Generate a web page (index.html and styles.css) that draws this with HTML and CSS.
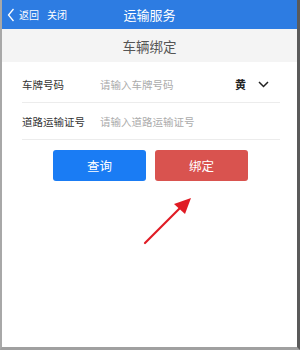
FILE: index.html
```html
<!DOCTYPE html>
<html lang="zh">
<head>
<meta charset="utf-8">
<link rel="stylesheet" href="styles.css">
</head>
<body>
<div class="frame">
  <header class="topbar">
    <div class="nav">
      <svg class="back" width="8" height="14" viewBox="0 0 8 14"><path d="M6.5 1 L1.5 7 L6.5 13" fill="none" stroke="#fff" stroke-width="1.3"/></svg>
      <span class="navtext">返回</span>
      <span class="navtext close">关闭</span>
    </div>
    <div class="title">运输服务</div>
  </header>
  <div class="subhead">车辆绑定</div>
  <div class="form">
    <div class="row">
      <span class="label">车牌号码</span>
      <span class="placeholder">请输入车牌号码</span>
      <span class="color">黄</span>
      <svg class="chev" width="11" height="7" viewBox="0 0 11 7"><path d="M1 1 L5.5 5.5 L10 1" fill="none" stroke="#222" stroke-width="1.5"/></svg>
    </div>
    <div class="row">
      <span class="label">道路运输证号</span>
      <span class="placeholder">请输入道路运输证号</span>
    </div>
  </div>
  <div class="buttons">
    <div class="btn blue">查询</div>
    <div class="btn red">绑定</div>
  </div>
  <svg class="arrow" width="300" height="350" viewBox="0 0 300 350">
    <line x1="145" y1="243" x2="181" y2="207" stroke="#e01b24" stroke-width="2.2" stroke-linecap="round"/>
    <polygon points="191,198 174,204 185,214" fill="#e01b24"/>
  </svg>
</div>
</body>
</html>
```
FILE: styles.css
```css
* { box-sizing: border-box; }
html, body { margin: 0; padding: 0; background: #fff; }
body {
  font-family: "Noto Sans CJK SC", "Noto Sans", sans-serif;
}
.frame {
  position: relative;
  width: 300px;
  height: 350px;
  border-left: 2px solid #a8a8a8;
  border-right: 3px solid #5a5a5a;
  border-bottom: 3px solid #a0a0a0;
  overflow: hidden;
  background: #fff;
}
.topbar {
  height: 29px;
  background: #2d7ce2;
  display: flex;
  align-items: center;
  position: relative;
  color: #fff;
}
.nav {
  display: flex;
  align-items: center;
  padding-left: 5px;
}
.back { margin-right: 4px; }
.navtext { font-size: 10px; line-height: 1; }
.close { margin-left: 8px; }
.title {
  position: absolute;
  left: 0;
  right: 0;
  text-align: center;
  font-size: 13px;
  line-height: 29px;
  pointer-events: none;
}
.subhead {
  height: 33px;
  background: #f4f4f4;
  display: flex;
  align-items: center;
  justify-content: center;
  font-size: 13.5px;
  color: #555;
}
.form {
  padding: 4px 17px 0 20px;
}
.row {
  height: 37px;
  display: flex;
  align-items: center;
  border-bottom: 1px solid #ececec;
  font-size: 10.5px;
}
.label {
  width: 78px;
  color: #333;
}
.placeholder {
  color: #ababab;
  flex: 1;
}
.color {
  color: #222;
  font-weight: bold;
  font-size: 11px;
  margin-right: 12px;
}
.chev { margin-right: 11px; }
.buttons {
  display: flex;
  justify-content: center;
  gap: 9px;
  padding-top: 10px;
  padding-left: 2px;
}
.btn {
  width: 93px;
  height: 31px;
  border-radius: 3px;
  color: #fff;
  font-size: 12.5px;
  display: flex;
  align-items: center;
  justify-content: center;
}
.blue { background: #1a7cf4; }
.red { background: #d9534f; }
.arrow {
  position: absolute;
  left: -2px;
  top: 0;
}
```
